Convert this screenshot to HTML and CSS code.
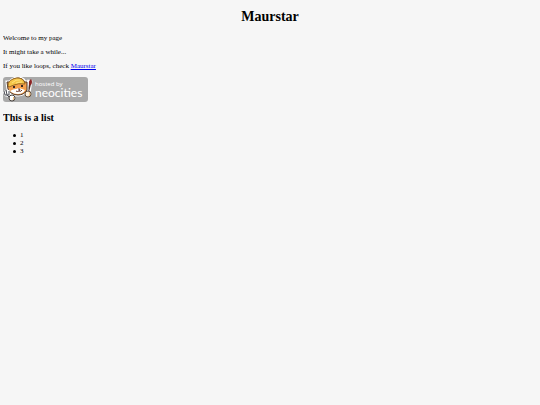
FILE: index.html
```html
<!DOCTYPE html>
<html lang="en">
<head>
    <meta charset="UTF-8">
    <meta name="viewport" content="width=device-width, initial-scale=1.0">
    <title>Maurstar</title>
    <link rel="stylesheet" href="styles.css">
</head>
<body>

    <h1>Maurstar</h1>

    <p>Welcome to my page</p>
    <p>It might take a while...</p>
    <p>If you like loops, check <a href="#">Maurstar</a></p>

    <a class="badge" href="#">
        <svg class="cat" viewBox="0 0 30 25" aria-hidden="true">
            <!-- brush -->
            <path d="M25 16l2-13" stroke="#fff" stroke-width="5"/>
            <path d="M25 15l2-8" stroke="#54352b" stroke-width="2"/>
            <path d="M26 8q-1-4 2-6q2 3 0 6z" fill="#8c2424"/>
            <!-- head -->
            <path d="M4 5l3 0q3-4 8-4q5 0 7 4l2 0v8q-3 5-9 5q-7 0-10-6z" fill="#f5a04d" stroke="#fff" stroke-width="3"/>
            <path d="M4 5l3 0q3-4 8-4q5 0 7 4l2 0v8q-3 5-9 5q-7 0-10-6z" fill="#f5a04d" stroke="#4c3526" stroke-width="1"/>
            <path d="M5 9q0-5 5-7q7-3 11 2l1 3q-7-1-11 1l-5 2z" fill="#f6c64a" stroke="#9b6a22" stroke-width="1"/>
            <path d="M9 6q4-4 8-3M13 6q3-1 6-1" stroke="#ffe27a" stroke-width="1" fill="none"/>
            <path d="M7 14q3-2 6-2l3-1l6 2q-2 4-7 4q-5 0-8-3z" fill="#fff"/>
            <path d="M11 9v2M19 8v2" stroke="#3a2a24" stroke-width="2"/>
            <path d="M15 12h2l-1 2q-2 1-3 0m3 0q2 1 3-1" stroke="#69382a" stroke-width="1" fill="none"/>
            <!-- fork -->
            <path d="M1 14l2 4l5 1M5 13l1 5" stroke="#fff" stroke-width="3" fill="none"/>
            <path d="M1 14l1 4l4 0l0-4M3 13l1 5l3 3" stroke="#4a4c54" stroke-width="1" fill="none"/>
            <!-- paws -->
            <circle cx="9" cy="21" r="3" fill="#fff" stroke="#4c4541" stroke-width="1"/>
            <circle cx="25" cy="17" r="3" fill="#fff3df" stroke="#66513f" stroke-width="1"/>
            <path d="M10 20l1 1l-1 2M26 15l1 2l-1 2" stroke="#f0b66b" stroke-width="1" fill="none"/>
        </svg>
        <span class="badge-text">
            <span class="hosted">hosted by</span>
            <span class="neocities">neocities</span>
        </span>
    </a>

    <h2>This is a list</h2>

    <ul>
        <li>1</li>
        <li>2</li>
        <li>3</li>
    </ul>

</body>
</html>
```

FILE: styles.css
```css
body {
    background-color: #f6f6f6;
    color: #000;
    font-family: "Liberation Serif", "Times New Roman", serif;
    font-size: 7px;
    line-height: 8px;
    margin: 9px 3px;
}

h1 {
    font-size: 14px;
    line-height: 16px;
    text-align: center;
    margin: 0 0 9px;
}

p {
    margin: 0 0 6px;
}

a {
    color: #0000ee;
}

.badge {
    display: flex;
    width: 85px;
    height: 25px;
    margin-top: 7px;
    border-radius: 3px;
    background-color: #a9a9a9;
    color: #fff;
    text-decoration: none;
}

.cat {
    width: 30px;
    height: 25px;
}

.badge-text {
    display: flex;
    flex-direction: column;
    padding: 4px 0 0 2px;
    font-family: "Open Sans", sans-serif;
}

.hosted {
    font-size: 6px;
    line-height: 7px;
}

.neocities {
    font-family: Lato, sans-serif;
    font-size: 12px;
    line-height: 9px;
}

h2 {
    font-size: 10px;
    line-height: 12px;
    margin: 10px 0 7px;
}

ul {
    list-style: none;
    margin: 0;
    padding-left: 10px;
}

li {
    display: flex;
    align-items: center;
    gap: 4px;
}

li::before {
    content: "";
    width: 3px;
    height: 3px;
    border-radius: 50%;
    background-color: #000;
}
```
